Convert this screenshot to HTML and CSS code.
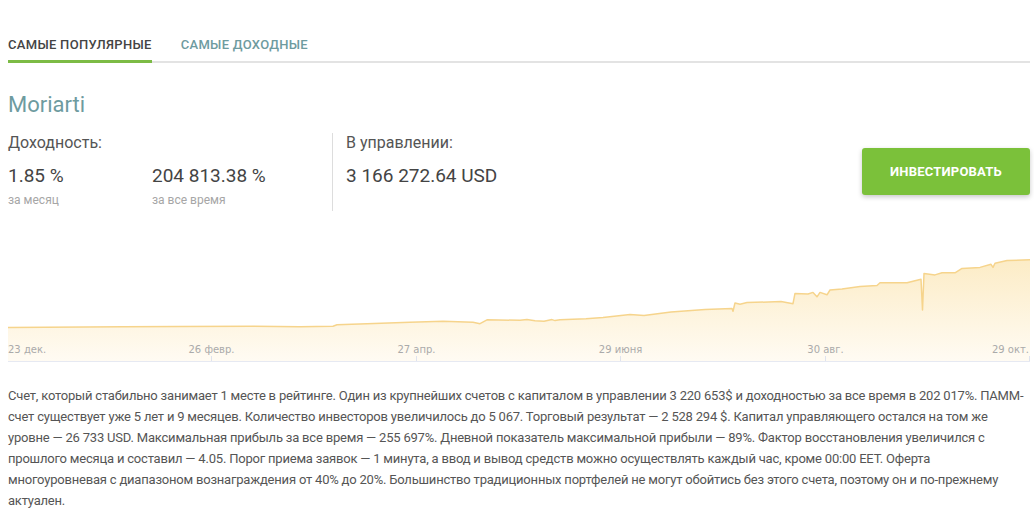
FILE: index.html
```html
<!DOCTYPE html>
<html lang="ru">
<head>
<meta charset="utf-8">
<title>Moriarti</title>
<link rel="stylesheet" href="styles.css">
</head>
<body>
<div class="page">
  <nav class="tabs">
    <a class="tab tab-active">Самые популярные</a>
    <a class="tab">Самые доходные</a>
  </nav>

  <h1 class="title">Moriarti</h1>

  <section class="summary">
    <div class="stats">
      <div class="stat-group stat-income">
        <div class="stat-label">Доходность:</div>
        <div class="stat-row">
          <div class="stat stat-month">
            <div class="stat-value">1.85 %</div>
            <div class="stat-note">за месяц</div>
          </div>
          <div class="stat">
            <div class="stat-value">204 813.38 %</div>
            <div class="stat-note">за все время</div>
          </div>
        </div>
      </div>
      <div class="stat-group stat-managed">
        <div class="stat-label">В управлении:</div>
        <div class="stat-value">3 166 272.64 USD</div>
      </div>
    </div>
    <button class="invest-btn">Инвестировать</button>
  </section>

  <svg class="chart" viewBox="8 236 1022 127" width="1022" height="127">
    <defs>
      <linearGradient id="fillGrad" x1="0" y1="0" x2="0" y2="1">
        <stop offset="0" stop-color="#fcecc6"/>
        <stop offset="1" stop-color="#fffbf3"/>
      </linearGradient>
    </defs>
    <path class="chart-area" fill="url(#fillGrad)" d="M8 328.5 L123 327.8 L180 327.6 L253 327.3 L300 327.7 L333 327.3 L337 325.8 L367 324.7 L410 323.3 L443 322.3 L473 323.3 L480 324.7 L487 320.8 L520 321.3 L527 320.6 L535 321.8 L544 322.3 L552 320.6 L555 321.6 L560 320.8 L586 319.7 L603 318.4 L630 315.6 L644 316.6 L671 312.9 L705 310.5 L732 309.5 L733 312.2 L735 304 L740 305.3 L747 303.6 L781 302.6 L793 304.7 L795 294.4 L808 295 L813 293.4 L817 297.8 L820 293.4 L827 295.8 L830 291 L842 289.9 L860 287.5 L877 286.5 L880 283.8 L907 283.8 L919 280.7 L921 280.3 L922.5 311 L924 274.5 L935 275.9 L942 273.8 L955 273.8 L962 269.4 L980 268.4 L991 265.3 L993 268.4 L995 264.2 L1007 261.5 L1030 260.8 L1030 362 L8 362 Z"/>
    <path class="chart-line" d="M8 328.5 L123 327.8 L180 327.6 L253 327.3 L300 327.7 L333 327.3 L337 325.8 L367 324.7 L410 323.3 L443 322.3 L473 323.3 L480 324.7 L487 320.8 L520 321.3 L527 320.6 L535 321.8 L544 322.3 L552 320.6 L555 321.6 L560 320.8 L586 319.7 L603 318.4 L630 315.6 L644 316.6 L671 312.9 L705 310.5 L732 309.5 L733 312.2 L735 304 L740 305.3 L747 303.6 L781 302.6 L793 304.7 L795 294.4 L808 295 L813 293.4 L817 297.8 L820 293.4 L827 295.8 L830 291 L842 289.9 L860 287.5 L877 286.5 L880 283.8 L907 283.8 L919 280.7 L921 280.3 L922.5 311 L924 274.5 L935 275.9 L942 273.8 L955 273.8 L962 269.4 L980 268.4 L991 265.3 L993 268.4 L995 264.2 L1007 261.5 L1030 260.8"/>
    <line class="chart-axis" x1="8" y1="362.5" x2="1030" y2="362.5"/>
    <path class="chart-ticks" d="M211.5 357 V362 M416.5 357 V362 M620.5 357 V362 M825.5 357 V362 M1029.5 357 V362"/>
    <text class="chart-label" x="8" y="354">23 дек.</text>
    <text class="chart-label" x="211.5" y="354" text-anchor="middle">26 февр.</text>
    <text class="chart-label" x="416.5" y="354" text-anchor="middle">27 апр.</text>
    <text class="chart-label" x="620.5" y="354" text-anchor="middle">29 июня</text>
    <text class="chart-label" x="825.5" y="354" text-anchor="middle">30 авг.</text>
    <text class="chart-label" x="1029" y="354" text-anchor="end">29 окт.</text>
  </svg>

  <p class="description">Счет, который стабильно занимает 1 месте в рейтинге. Один из крупнейших счетов с капиталом в управлении 3 220 653$ и доходностью за все время в 202 017%. ПАММ-счет существует уже 5 лет и 9 месяцев. Количество инвесторов увеличилось до 5 067. Торговый результат — 2 528 294 $. Капитал управляющего остался на том же уровне — 26 733 USD. Максимальная прибыль за все время — 255 697%. Дневной показатель максимальной прибыли — 89%. Фактор восстановления увеличился с прошлого месяца и составил — 4.05. Порог приема заявок — 1 минута, а ввод и вывод средств можно осуществлять каждый час, кроме 00:00 EET. Оферта многоуровневая с диапазоном вознаграждения от 40% до 20%. Большинство традиционных портфелей не могут обойтись без этого счета, поэтому он и по-прежнему актуален.</p>
</div>
</body>
</html>
```

FILE: styles.css
```css
html, body {
  margin: 0;
  padding: 0;
  background: #ffffff;
}

body {
  font-family: Roboto, "Liberation Sans", sans-serif;
  color: #555555;
}

.page {
  width: 1022px;
  margin-left: 8px;
  padding-top: 37px;
}

.tabs {
  display: flex;
  gap: 29px;
  border-bottom: 2px solid #e3e3e3;
}

.tab {
  display: block;
  font-size: 13px;
  line-height: 16px;
  font-weight: 500;
  text-transform: uppercase;
  letter-spacing: 0.3px;
  color: #6e9b9f;
  padding-bottom: 7px;
  margin-bottom: -2px;
  border-bottom: 3px solid transparent;
  cursor: pointer;
}

.tab-active {
  color: #444444;
  border-bottom-color: #7cbb45;
}

.title {
  margin: 29px 0 0;
  font-size: 22px;
  line-height: 26px;
  font-weight: 400;
  color: #6e9b9f;
}

.summary {
  display: flex;
  justify-content: space-between;
  align-items: flex-start;
  margin-top: 15px;
}

.stats {
  display: flex;
}

.stat-group {
  padding-bottom: 3px;
}

.stat-income {
  width: 324px;
  border-right: 1px solid #dddddd;
}

.stat-managed {
  padding-left: 13px;
}

.stat-label {
  font-size: 16px;
  line-height: 20px;
  color: #555555;
  margin-bottom: 10px;
}

.stat-row {
  display: flex;
}

.stat-month {
  width: 144px;
}

.stat-value {
  font-size: 19px;
  line-height: 25px;
  color: #444444;
}

.stat-note {
  margin-top: 4px;
  font-size: 12px;
  line-height: 16px;
  color: #a6a6a6;
}

.invest-btn {
  margin-top: 15px;
  width: 168px;
  height: 47px;
  border: none;
  border-radius: 3px;
  background: #7bc13a;
  color: #ffffff;
  font-family: Roboto, "Liberation Sans", sans-serif;
  font-size: 13px;
  font-weight: 700;
  letter-spacing: 0.2px;
  text-transform: uppercase;
  box-shadow: 0 2px 5px rgba(0, 0, 0, 0.22);
  cursor: pointer;
}

.chart {
  display: block;
  margin-top: 24px;
}

.chart-line {
  fill: none;
  stroke: #f6d48c;
  stroke-width: 1.5;
  stroke-linejoin: round;
}

.chart-axis {
  stroke: #e6e9f2;
  stroke-width: 1;
}

.chart-ticks {
  stroke: #dfe3ee;
  stroke-width: 1;
}

.chart-label {
  font-family: "DejaVu Sans", Verdana, sans-serif;
  font-size: 10px;
  fill: #aaaaaa;
}

.description {
  margin: 23px 0 0;
  width: 1018px;
  font-size: 13px;
  letter-spacing: -0.2px;
  line-height: 21px;
  color: #555555;
}
```
